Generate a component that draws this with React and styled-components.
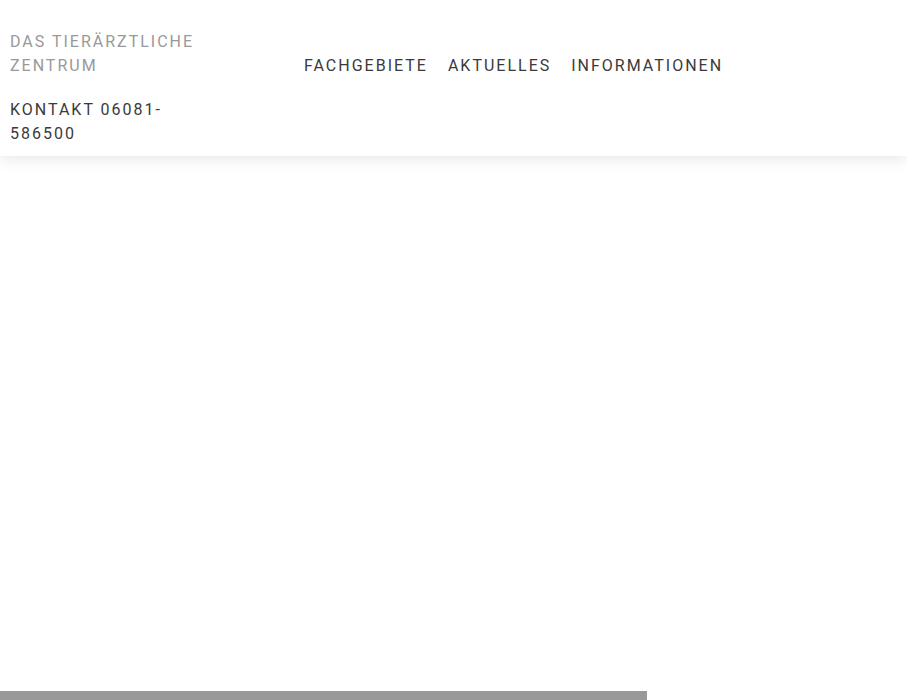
import React from 'react'
import styled, { createGlobalStyle } from 'styled-components'

const GlobalStyle = createGlobalStyle`
  * { box-sizing: border-box; }
  body {
    margin: 0;
    background: #fff;
    font-family: Roboto, "Liberation Sans", sans-serif;
  }
`

const Page = styled.div`
  min-height: 700px;
  display: flex;
  flex-direction: column;
`

const Header = styled.header`
  display: flex;
  align-items: flex-start;
  padding: 30px 10px 10px;
  background: #fff;
  box-shadow: 0 4px 14px rgba(0, 0, 0, .09);
  position: relative;
  z-index: 1;
`

const Brand = styled.div`
  width: 200px;
  display: flex;
  flex-direction: column;
  gap: 20px;
`

const Line = styled.a`
  display: block;
  font-size: 16px;
  line-height: 24px;
  letter-spacing: 2px;
  text-transform: uppercase;
  text-decoration: none;
  color: ${p => (p.$muted ? '#999' : '#3a3a3a')};
`

const Nav = styled.nav`
  display: flex;
  gap: 20px;
  margin-left: 94px;
  padding-top: 24px;
`

const NavLink = styled.a`
  font-size: 16px;
  line-height: 24px;
  letter-spacing: 2px;
  text-transform: uppercase;
  text-decoration: none;
  color: #3a3a3a;
`

const Main = styled.main`
  flex: 1;
`

const Bar = styled.div`
  width: 647px;
  height: 9px;
  background: #999;
`

const App = () => {
  return (
    <Page>
      <GlobalStyle />
      <Header>
        <Brand>
          <Line $muted href="#">Das Tierärztliche Zentrum</Line>
          <Line href="#">Kontakt 06081-586500</Line>
        </Brand>
        <Nav>
          <NavLink href="#">Fachgebiete</NavLink>
          <NavLink href="#">Aktuelles</NavLink>
          <NavLink href="#">Informationen</NavLink>
        </Nav>
      </Header>
      <Main />
      <Bar />
    </Page>
  )
}

export default App
